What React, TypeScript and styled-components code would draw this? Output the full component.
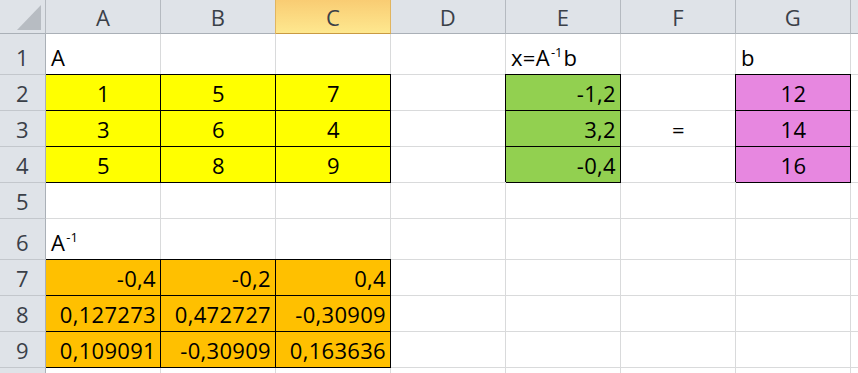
import React from "react";
import styled, { createGlobalStyle, css } from "styled-components";

const GlobalStyle = createGlobalStyle`
  html, body {
    margin: 0;
    padding: 0;
    background: #ffffff;
    overflow: hidden;
  }
`;

type Fill = "yellow" | "green" | "pink" | "orange";
type Align = "left" | "center" | "right";

const fills: Record<Fill, string> = {
  yellow: "#ffff00",
  green: "#92d050",
  pink: "#e787e0",
  orange: "#ffc000",
};

const Sheet = styled.div`
  display: grid;
  grid-template-columns: 46px repeat(7, 115px) 1fr;
  grid-template-rows: 34px 41px repeat(4, 36px) 41px repeat(3, 36px) 6px;
  width: 858px;
  height: 373px;
  overflow: hidden;
  font-family: "Open Sans", "Liberation Sans", sans-serif;
  font-size: 22px;
  letter-spacing: 0.3px;
  color: #000;
`;

const HeaderCell = styled.div<{ $selected?: boolean }>`
  box-sizing: border-box;
  display: flex;
  align-items: center;
  justify-content: center;
  padding-top: 1px;
  background: #dfe3e8;
  border-right: 1px solid #b5bac0;
  border-bottom: 1px solid #aab0b7;
  color: #3a4048;
  line-height: 1;

  ${(p) =>
    p.$selected &&
    css`
      background: linear-gradient(#f9cc73, #fee88f);
      border-right-color: #e1b55f;
      border-bottom-color: #c99a42;
      box-shadow: -1px 0 0 #e1b55f;
    `}
`;

const Corner = styled(HeaderCell)`
  position: relative;

  &::after {
    content: "";
    position: absolute;
    left: 17px;
    top: 5px;
    width: 24px;
    height: 25px;
    background: #b7bcc2;
    clip-path: polygon(100% 0, 100% 100%, 0 100%);
  }
`;

const RowHeader = styled(HeaderCell)`
  align-items: flex-end;
  padding: 0 0 6px;
  border-right-color: #aab0b7;
  border-bottom-color: #c3c7cc;
`;

const Cell = styled.div<{ $fill?: Fill; $align?: Align; $edge?: boolean }>`
  box-sizing: border-box;
  display: flex;
  align-items: flex-end;
  justify-content: ${(p) =>
    p.$align === "right" ? "flex-end" : p.$align === "center" ? "center" : "flex-start"};
  padding: 0 4px 6px 5px;
  border-right: 1px solid #d9dadb;
  border-bottom: 1px solid #d9dadb;
  line-height: 1;
  white-space: nowrap;

  ${(p) =>
    p.$fill &&
    css`
      background: ${fills[p.$fill]};
      border-right-color: #000;
      border-bottom-color: #000;
      box-shadow: ${p.$edge ? "0 -1px 0 #000" : "-1px -1px 0 #000, 0 -1px 0 #000"};
    `}
`;

const Value = styled.span`
  display: block;
  line-height: 1;
`;

const Sup = styled.sup`
  font-size: 13px;
  letter-spacing: 0;
  vertical-align: 9px;
  line-height: 0;
  margin: 0 1px 0 1px;
`;

type CellSpec = {
  v?: React.ReactNode;
  fill?: Fill;
  align?: Align;
};

const columns = ["A", "B", "C", "D", "E", "F", "G", ""];

const y = (v: string): CellSpec => ({ v, fill: "yellow", align: "center" });
const g = (v: string): CellSpec => ({ v, fill: "green", align: "right" });
const p = (v: string): CellSpec => ({ v, fill: "pink", align: "center" });
const o = (v: string): CellSpec => ({ v, fill: "orange", align: "right" });
const e: CellSpec = {};
const blank = [e, e, e, e, e, e, e, e];

const rows: CellSpec[][] = [
  [
    { v: "A" }, e, e, e,
    { v: <>x=A<Sup>-1</Sup>b</> }, e,
    { v: "b" }, e,
  ],
  [y("1"), y("5"), y("7"), e, g("-1,2"), e, p("12"), e],
  [y("3"), y("6"), y("4"), e, g("3,2"), { v: "=", align: "center" }, p("14"), e],
  [y("5"), y("8"), y("9"), e, g("-0,4"), e, p("16"), e],
  blank,
  [{ v: <>A<Sup>-1</Sup></> }, e, e, e, e, e, e, e],
  [o("-0,4"), o("-0,2"), o("0,4"), e, e, e, e, e],
  [o("0,127273"), o("0,472727"), o("-0,30909"), e, e, e, e, e],
  [o("0,109091"), o("-0,30909"), o("0,163636"), e, e, e, e, e],
];

export default function App() {
  return (
    <>
      <GlobalStyle />
      <Sheet>
        <Corner />
        {columns.map((c, i) => (
          <HeaderCell key={i} $selected={c === "C"}>
            {c}
          </HeaderCell>
        ))}
        {rows.map((row, r) => (
          <React.Fragment key={r}>
            <RowHeader>{r + 1}</RowHeader>
            {row.map((cell, i) => (
              <Cell key={i} $fill={cell.fill} $align={cell.align} $edge={i === 0}>
                {cell.v !== undefined && <Value>{cell.v}</Value>}
              </Cell>
            ))}
          </React.Fragment>
        ))}
        {/* row 10, only its top edge shows */}
        <RowHeader />
        {blank.map((_, i) => (
          <Cell key={i} />
        ))}
      </Sheet>
    </>
  );
}
